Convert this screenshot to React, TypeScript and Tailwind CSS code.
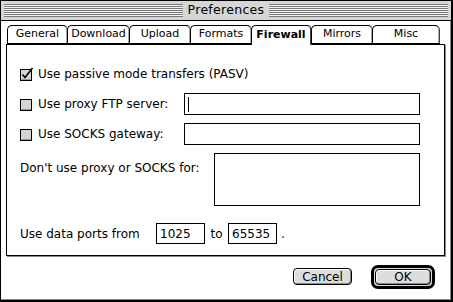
import React from 'react';

// Classic Mac OS "Preferences" window — Firewall tab

const FONT = { fontFamily: '"DejaVu Sans", "Liberation Sans", sans-serif' };

const TABS: { label: string; w: string }[] = [
  { label: 'General', w: 'w-[61px]' },
  { label: 'Download', w: 'w-[63px]' },
  { label: 'Upload', w: 'w-[62px]' },
  { label: 'Formats', w: 'w-[62px]' },
  { label: 'Firewall', w: 'w-[61px]' },
  { label: 'Mirrors', w: 'w-[62px]' },
  { label: 'Misc', w: 'w-[68px]' },
];

function Stripes() {
  return (
    <div className="flex-1 h-[13px] bg-[repeating-linear-gradient(to_bottom,#7a7a7a_0,#7a7a7a_1px,#f4f4f4_1px,#f4f4f4_2px)] border-b border-[#7a7a7a]" />
  );
}

function Checkbox({ checked }: { checked?: boolean }) {
  return (
    <svg width="14" height="14" viewBox="0 0 14 14" className="shrink-0">
      <rect x="0.5" y="2.5" width="11" height="11" fill="#d4d4d4" stroke="#000" />
      <line x1="1.5" y1="12.5" x2="11" y2="12.5" stroke="#999" />
      {checked && (
        <path d="M2.5 7.5 L5 10.5 L12.5 1" fill="none" stroke="#000" strokeWidth="1.6" />
      )}
    </svg>
  );
}

function Field({ w, h = 'h-[22px]', children }: { w: string; h?: string; children?: React.ReactNode }) {
  return (
    <div className={`${w} ${h} border border-black bg-white shrink-0 flex items-center px-[3px] text-[12px] text-black`}>
      {children}
    </div>
  );
}

export default function App() {
  return (
    <div
      className="w-[453px] h-[302px] bg-white border border-black border-r-2 border-b-2 flex flex-col overflow-hidden"
      style={FONT}
    >
      {/* Title bar */}
      <div className="h-[20px] bg-[#d6d6d6] border-b border-black flex items-center gap-[5px] px-[3px] shrink-0">
        <Stripes />
        <span className="text-[12.5px] tracking-[0.3px] text-black leading-none">Preferences</span>
        <Stripes />
      </div>

      <div className="flex-1 flex flex-col px-[5px] pt-[4px] border-r border-b border-[#888]">
        {/* Tabs */}
        <div className="flex h-[19px] pl-[1px] shrink-0">
          {TABS.map((t) => {
            const active = t.label === 'Firewall';
            return (
              <div
                key={t.label}
                className={
                  `${t.w} -mr-[1px] relative z-10 flex items-center justify-center rounded-t-[5px] border border-black border-r-[#444] text-[11px] text-black bg-white ` +
                  (active ? 'border-b-0 font-bold h-[20px] border-r-2' : 'h-[19px] shadow-[inset_-1px_0_0_#aaa]')
                }
              >
                {t.label}
              </div>
            );
          })}
        </div>

        {/* Panel */}
        <div className="h-[212px] border border-black shadow-[1px_1px_0_#888] bg-white flex flex-col pl-[13px] pr-[24px] pt-[18px] text-[12px] text-black">
          <div className="h-[22px] flex items-center gap-[4px]">
            <Checkbox checked />
            <span>Use passive mode transfers (PASV)</span>
          </div>

          <div className="h-[22px] mt-[8px] flex items-center gap-[4px]">
            <Checkbox />
            <span className="flex-1">Use proxy FTP server:</span>
            <Field w="w-[236px]">
              <div className="w-[1px] h-[15px] bg-black" />
            </Field>
          </div>

          <div className="h-[22px] mt-[8px] flex items-center gap-[4px]">
            <Checkbox />
            <span className="flex-1">Use SOCKS gateway:</span>
            <Field w="w-[236px]" />
          </div>

          <div className="h-[53px] mt-[8px] flex items-start">
            <span className="flex-1 pt-[6px]">Don't use proxy or SOCKS for:</span>
            <Field w="w-[206px]" h="h-[53px]" />
          </div>

          <div className="h-[21px] mt-[17px] flex items-center">
            <span className="w-[136px]">Use data ports from</span>
            <Field w="w-[49px]" h="h-[21px]">1025</Field>
            <span className="w-[23px] text-center">to</span>
            <Field w="w-[49px]" h="h-[21px]">65535</Field>
            <span className="ml-[4px]">.</span>
          </div>
        </div>

        {/* Buttons */}
        <div className="flex-1 flex items-center justify-end gap-[19px] pr-[10px] pb-[2px]">
          <button className="w-[59px] h-[17px] rounded-[4px] border border-black bg-[#dddddd] shadow-[inset_-1px_-1px_0_#888,inset_1px_1px_0_#fff] text-[12px] leading-none text-black">
            Cancel
          </button>
          <div className="w-[64px] h-[24px] rounded-[7px] border-[3px] border-black bg-[#dddddd] p-[1px] flex">
            <button className="flex-1 rounded-[4px] border border-black bg-[#dddddd] shadow-[inset_-1px_-1px_0_#888,inset_1px_1px_0_#fff] text-[12px] leading-none text-black">
              OK
            </button>
          </div>
        </div>
      </div>
    </div>
  );
}
